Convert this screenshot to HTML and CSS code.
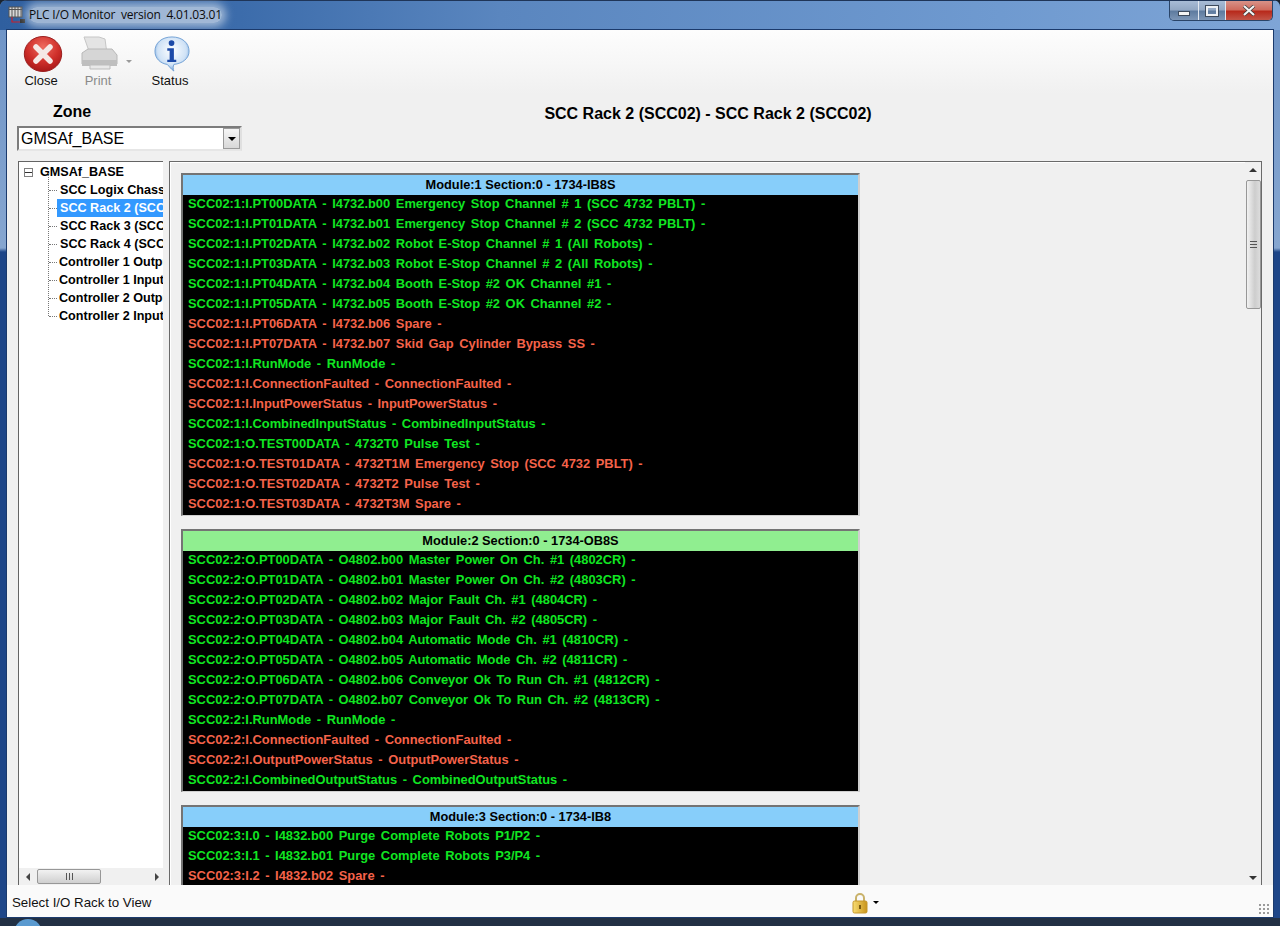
FILE: index.html
```html
<!DOCTYPE html>
<html lang="en">
<head>
<meta charset="utf-8">
<title>PLC I/O Monitor</title>
<link rel="stylesheet" href="styles.css">
</head>
<body>
<div class="window">
  <div class="titlebar">
    <svg class="app-icon" width="18" height="20" viewBox="0 0 18 20">
      <rect x="1" y="2" width="13" height="10" fill="#d8d8d8" stroke="#555"/>
      <path d="M1 4.5h13M4 2v10M7 2v10M10 2v10M13 2v10" stroke="#555" fill="none"/>
      <path d="M4 12v5h8" stroke="#c8202a" fill="none" stroke-width="1.2"/>
      <rect x="12" y="14" width="5" height="4" fill="#333"/>
    </svg>
    <span class="app-title">PLC I/O Monitor&nbsp; version&nbsp; 4.01.03.01</span>
    <div class="win-controls">
      <div class="win-btn min"><span class="glyph-min"></span></div>
      <div class="win-btn max"><span class="glyph-max"></span></div>
      <div class="win-btn close">
        <svg width="14" height="11" viewBox="0 0 14 11"><path d="M2 1l10 9M12 1L2 10" stroke="#3a3a3a" stroke-width="3.6" fill="none"/><path d="M2 1l10 9M12 1L2 10" stroke="#f4f4f4" stroke-width="2.2" fill="none"/></svg>
      </div>
    </div>
  </div>

  <div class="client">
    <div class="toolbar">
      <div class="tool">
        <svg width="40" height="36" viewBox="0 0 40 36">
          <defs>
            <radialGradient id="redg" cx="50%" cy="30%" r="70%"><stop offset="0" stop-color="#ef6a5e"/><stop offset=".6" stop-color="#cf2f2a"/><stop offset="1" stop-color="#a81818"/></radialGradient>
          </defs>
          <ellipse cx="20" cy="18" rx="18.700" ry="17.500" fill="url(#redg)" stroke="#9a2020"/>
          <path d="M13 11L27 25M27 11L13 25" stroke="#f5e9e6" stroke-width="5.500" stroke-linecap="round"/>
        </svg>
        <span class="tool-label">Close</span>
      </div>
      <div class="tool tool-print">
        <svg width="38" height="36" viewBox="0 0 38 36">
          <path d="M3 1h15l6 2 2 15H9z" fill="#e4e4e4" stroke="#c6c6c6"/>
          <path d="M1 17l6-4h24l5 6v9H1z" fill="#d6d6d6" stroke="#b8b8b8"/>
          <path d="M1 24h35v6H1z" fill="#bfbfbf"/>
          <path d="M9 29h20v4H9z" fill="#e8e8e8" stroke="#bdbdbd"/>
        </svg>
        <span class="tool-label muted">Print</span>
        <span class="print-caret"></span>
      </div>
      <div class="tool tool-status">
        <svg width="40" height="36" viewBox="0 0 40 38">
          <defs>
            <radialGradient id="blueg" cx="50%" cy="40%" r="60%"><stop offset="0" stop-color="#ffffff"/><stop offset=".7" stop-color="#cfe2f6"/><stop offset="1" stop-color="#6fa3dc"/></radialGradient>
          </defs>
          <path d="M20 1C9 1 2 7.500 2 16c0 8 6 13 13 14 2 2 4 5 7 7-1-2-1-5 0-7 9-1 16-6 16-14C38 7.500 31 1 20 1z" fill="url(#blueg)" stroke="#6f9fd4"/>
          <circle cx="19.500" cy="7.500" r="3" fill="#1c4aa8"/>
          <path d="M15 13h7v12h2.500v2.500h-9.500V25h2.500v-9.500H15z" fill="#1c4aa8"/>
        </svg>
        <span class="tool-label">Status</span>
      </div>
    </div>

    <div class="header">
      <div class="zone">
        <div class="zone-label">Zone</div>
        <div class="combo">
          <span class="combo-text">GMSAf_BASE</span>
          <span class="combo-btn"><span class="caret-down"></span></span>
        </div>
      </div>
      <div class="page-title">SCC Rack 2 (SCC02) - SCC Rack 2 (SCC02)</div>
    </div>

    <div class="main">
      <div class="tree">
        <div class="tree-body">
          <div class="tree-root"><span class="expander"></span><span class="root-conn"></span><span>GMSAf_BASE</span></div>
          <div class="tree-children">
            <div class="tree-row"><span class="conn"></span><span class="node in1">SCC Logix Chassis</span></div>
            <div class="tree-row selected"><span class="conn"></span><span class="node in1">SCC Rack 2 (SCC02)</span></div>
            <div class="tree-row"><span class="conn"></span><span class="node in1">SCC Rack 3 (SCC03)</span></div>
            <div class="tree-row"><span class="conn"></span><span class="node in1">SCC Rack 4 (SCC04)</span></div>
            <div class="tree-row"><span class="conn"></span><span class="node">Controller 1 Output</span></div>
            <div class="tree-row"><span class="conn"></span><span class="node">Controller 1 Input</span></div>
            <div class="tree-row"><span class="conn"></span><span class="node">Controller 2 Output</span></div>
            <div class="tree-row"><span class="conn"></span><span class="node">Controller 2 Input</span></div>
          </div>
        </div>
        <div class="hscroll">
          <span class="arrow-left"></span>
          <div class="hthumb"><span class="grip-v"></span></div>
          <span class="arrow-right"></span>
        </div>
      </div>

      <div class="panel">
        <div class="modules">
          <section class="module">
            <h2 class="mod-head blue">Module:1 Section:0 - 1734-IB8S</h2>
            <div class="row on">SCC02:1:I.PT00DATA - I4732.b00 Emergency Stop Channel # 1 (SCC 4732 PBLT) -</div>
            <div class="row on">SCC02:1:I.PT01DATA - I4732.b01 Emergency Stop Channel # 2 (SCC 4732 PBLT) -</div>
            <div class="row on">SCC02:1:I.PT02DATA - I4732.b02 Robot E-Stop Channel # 1 (All Robots) -</div>
            <div class="row on">SCC02:1:I.PT03DATA - I4732.b03 Robot E-Stop Channel # 2 (All Robots) -</div>
            <div class="row on">SCC02:1:I.PT04DATA - I4732.b04 Booth E-Stop #2 OK Channel #1 -</div>
            <div class="row on">SCC02:1:I.PT05DATA - I4732.b05 Booth E-Stop #2 OK Channel #2 -</div>
            <div class="row off">SCC02:1:I.PT06DATA - I4732.b06 Spare -</div>
            <div class="row off">SCC02:1:I.PT07DATA - I4732.b07 Skid Gap Cylinder Bypass SS -</div>
            <div class="row on">SCC02:1:I.RunMode - RunMode -</div>
            <div class="row off">SCC02:1:I.ConnectionFaulted - ConnectionFaulted -</div>
            <div class="row off">SCC02:1:I.InputPowerStatus - InputPowerStatus -</div>
            <div class="row on">SCC02:1:I.CombinedInputStatus - CombinedInputStatus -</div>
            <div class="row on">SCC02:1:O.TEST00DATA - 4732T0 Pulse Test -</div>
            <div class="row off">SCC02:1:O.TEST01DATA - 4732T1M Emergency Stop (SCC 4732 PBLT) -</div>
            <div class="row off">SCC02:1:O.TEST02DATA - 4732T2 Pulse Test -</div>
            <div class="row off">SCC02:1:O.TEST03DATA - 4732T3M Spare -</div>
          </section>
          <section class="module">
            <h2 class="mod-head green">Module:2 Section:0 - 1734-OB8S</h2>
            <div class="row on">SCC02:2:O.PT00DATA - O4802.b00 Master Power On Ch. #1 (4802CR) -</div>
            <div class="row on">SCC02:2:O.PT01DATA - O4802.b01 Master Power On Ch. #2 (4803CR) -</div>
            <div class="row on">SCC02:2:O.PT02DATA - O4802.b02 Major Fault Ch. #1 (4804CR) -</div>
            <div class="row on">SCC02:2:O.PT03DATA - O4802.b03 Major Fault Ch. #2 (4805CR) -</div>
            <div class="row on">SCC02:2:O.PT04DATA - O4802.b04 Automatic Mode Ch. #1 (4810CR) -</div>
            <div class="row on">SCC02:2:O.PT05DATA - O4802.b05 Automatic Mode Ch. #2 (4811CR) -</div>
            <div class="row on">SCC02:2:O.PT06DATA - O4802.b06 Conveyor Ok To Run Ch. #1 (4812CR) -</div>
            <div class="row on">SCC02:2:O.PT07DATA - O4802.b07 Conveyor Ok To Run Ch. #2 (4813CR) -</div>
            <div class="row on">SCC02:2:I.RunMode - RunMode -</div>
            <div class="row off">SCC02:2:I.ConnectionFaulted - ConnectionFaulted -</div>
            <div class="row off">SCC02:2:I.OutputPowerStatus - OutputPowerStatus -</div>
            <div class="row on">SCC02:2:I.CombinedOutputStatus - CombinedOutputStatus -</div>
          </section>
          <section class="module">
            <h2 class="mod-head blue">Module:3 Section:0 - 1734-IB8</h2>
            <div class="row on">SCC02:3:I.0 - I4832.b00 Purge Complete Robots P1/P2 -</div>
            <div class="row on">SCC02:3:I.1 - I4832.b01 Purge Complete Robots P3/P4 -</div>
            <div class="row off">SCC02:3:I.2 - I4832.b02 Spare -</div>
          </section>
        </div>
        <div class="vscroll">
          <span class="arrow-up"></span>
          <div class="vthumb"><span class="grip-h"></span></div>
          <span class="vspacer"></span>
          <span class="arrow-down"></span>
        </div>
      </div>
    </div>

    <div class="statusbar">
      <span class="status-text">Select I/O Rack to View</span>
      <svg class="lock" width="16" height="22" viewBox="0 0 16 22">
        <defs><linearGradient id="lockg" x1="0" x2="1"><stop offset="0" stop-color="#f8dc72"/><stop offset="1" stop-color="#c8941c"/></linearGradient></defs>
        <path d="M4 10V6a4 4 0 0 1 8 0v4" fill="none" stroke="#c9b26a" stroke-width="2"/>
        <rect x="1" y="9" width="14" height="12" rx="1.500" fill="url(#lockg)" stroke="#c4962a"/>
        <rect x="7" y="13" width="2" height="4" fill="#7a5a10"/>
      </svg>
      <span class="lock-caret"></span>
      <span class="resize-grip"></span>
    </div>
  </div>
  <div class="taskstrip"><span class="orb"></span></div>
</div>
</body>
</html>
```
FILE: styles.css
```css
* { box-sizing: border-box; }
html, body { margin: 0; padding: 0; }
body { width: 1280px; height: 926px; overflow: hidden; background: #1a2430; font-family: "Liberation Sans", Arial, sans-serif; }

.window { width: 1280px; height: 926px; display: flex; flex-direction: column; border-radius: 7px 7px 0 0; overflow: hidden;
  background: linear-gradient(to bottom, #6d93c6 0, #86a6d0 248px, #1e4688 252px, #1e4688 100%); }

.titlebar { height: 30px; flex: none; display: flex; align-items: flex-start; padding-left: 8px; border-top: 1px solid #1f3558;
  background: linear-gradient(to right, #2f5f9f 0, #3c6cab 240px, #5a86bf 500px, #6f9ad0 1000px, #7fa5d6 1280px); }
.app-icon { margin-top: 4px; flex: none; }
.app-title { margin: 6px 0 0 3px; font: 12px/16px "Open Sans", "Liberation Sans", sans-serif; letter-spacing: -.2px; color: #0c0c0c;
  background: rgba(225, 232, 242, .62); box-shadow: 0 0 8px 4px rgba(225, 232, 242, .62); border-radius: 8px; white-space: nowrap; }
.win-controls { margin-left: auto; margin-right: 7px; display: flex; height: 20px; border: 1px solid #2a4468; border-top: 0; border-radius: 0 0 5px 5px; overflow: hidden; }
.win-btn { height: 19px; display: flex; align-items: center; justify-content: center; background: linear-gradient(to bottom, #a8bcd6 0, #93a8c4 45%, #5f7ca0 55%, #7d96b6 100%); border-right: 1px solid #e2e8f0; }
.win-btn.min { width: 29px; }
.win-btn.max { width: 27px; }
.win-btn.close { width: 46px; border-right: 0; background: linear-gradient(to bottom, #d89288 0, #cf6c5e 45%, #b82a1c 55%, #c25548 100%); }
.glyph-min { width: 12px; height: 5px; margin-top: 5px; background: #f4f4f4; border: 1px solid #3d4a5c; }
.glyph-max { width: 12px; height: 10px; background: transparent; border: 2px solid #eef1f5; outline: 1px solid #3d4a5c; }

.client { flex: 1; min-height: 0; margin: 0 7px; display: flex; flex-direction: column; background: #f0f0f0; outline: 1px solid #1b3a6c; }

.toolbar { height: 64px; flex: none; display: flex; align-items: flex-start; padding: 6px 0 0 10px; background: linear-gradient(to bottom, #fdfdfd 0, #f7f7f7 50%, #f0f0f0 100%); }
.tool { width: 48px; display: flex; flex-direction: column; align-items: center; }
.tool svg { margin-left: 4px; }
.tool-print { margin-left: 9px; position: relative; }
.tool-status { margin-left: 24px; }
.tool-label { font-size: 13px; line-height: 15px; margin-top: 1px; color: #111; }
.tool-label.muted { color: #8a8a8a; }
.print-caret { position: absolute; right: -10px; top: 24px; border: 3px solid transparent; border-top: 3px solid #9a9a9a; }

.header { height: 67px; flex: none; display: flex; }
.zone { width: 235px; flex: none; padding-left: 10px; }
.zone-label { margin: 9px 0 0 36px; font-size: 16px; line-height: 18px; font-weight: bold; color: #000; }
.combo { margin-top: 5px; width: 225px; height: 25px; display: flex; align-items: center; background: #fff; border: 2px solid #7c7c7c; border-right-color: #e0e0e0; border-bottom-color: #e6e6e6; }
.combo-text { flex: 1; padding-left: 2px; font-size: 16px; color: #000; }
.combo-btn { width: 17px; height: 21px; display: flex; align-items: center; justify-content: center; background: linear-gradient(to bottom, #f6f6f6, #d8d8d8); border: 1px solid #9a9a9a; }
.caret-down { border: 4px solid transparent; border-top: 4px solid #000; border-bottom: 0; }
.page-title { flex: 1; padding: 11px 99px 0 0; text-align: center; font-size: 16px; line-height: 18px; font-weight: bold; color: #000; }

.main { flex: 1; min-height: 0; display: flex; padding: 0 11px; gap: 6px; }

.tree { width: 145px; flex: none; display: flex; flex-direction: column; background: #fff; border-left: 1px solid #646464; border-top: 1px solid #646464; height: 725px; padding-top: 1px; }
.tree-body { flex: 1; min-height: 0; overflow: hidden; font-size: 12.6px; font-weight: bold; color: #000; white-space: nowrap; }
.tree-root { height: 18px; display: flex; align-items: center; padding-left: 5px; }
.expander { width: 9px; height: 9px; border: 1px solid #808080; background: linear-gradient(to bottom, #fff 0, #fff 3px, #333 3px, #333 4px, #fff 4px); flex: none; }
.root-conn { width: 7px; flex: none; }
.tree-children { position: relative; }
.tree-children::before { content: ""; position: absolute; left: 29px; top: -8px; bottom: 9px; border-left: 1px dotted #777; }
.tree-row { height: 18px; display: flex; align-items: center; padding-left: 30px; }
.conn { width: 8px; flex: none; border-top: 1px dotted #777; }
.node { height: 18px; line-height: 18px; flex: 1; padding-left: 2px; overflow: hidden; }
.node.in1 { padding-left: 3px; }
.selected .node { background: #3399ff; color: #fff; }

.hscroll { height: 17px; flex: none; margin-bottom: 1px; display: flex; align-items: center; background: #f0f0f0; padding: 0 4px 0 7px; }
.arrow-left { border: 4px solid transparent; border-right: 4px solid #444; border-left: 0; }
.arrow-right { margin-left: auto; border: 4px solid transparent; border-left: 4px solid #444; border-right: 0; }
.hthumb { width: 64px; height: 15px; margin-left: 7px; display: flex; align-items: center; justify-content: center; border: 1px solid #979797; border-radius: 2px; background: linear-gradient(to bottom, #f2f2f2, #cfcfcf); }
.grip-v { width: 7px; height: 7px; background: repeating-linear-gradient(to right, #555 0, #555 1px, transparent 1px, transparent 3px); }

.panel { flex: 1; min-width: 0; height: 725px; display: flex; background: #f0f0f0; border: 1px solid #6a6a6a; overflow: hidden; box-shadow: inset 1px 1px 0 #fff; }
.modules { flex: 1; min-width: 0; padding: 11px 0 0 11px; display: flex; flex-direction: column; gap: 13px; }
.module { width: 679px; flex: none; background: #000; border: 2px solid #747474; border-bottom: 1px solid #cfcfcf; border-right-color: #cfcfcf; }
.mod-head { margin: 0; height: 20px; font-size: 12.8px; line-height: 19px; font-weight: bold; text-align: center; color: #000; }
.mod-head.blue { background: #87cefa; }
.mod-head.green { background: #90ee90; }
.row { height: 20px; padding-left: 5px; font-size: 12.9px; line-height: 18px; font-weight: bold; white-space: nowrap; word-spacing: 2px; }
.row.on { color: #10e622; }
.row.off { color: #f5634a; }

.vscroll { width: 16px; flex: none; display: flex; flex-direction: column; align-items: center; background: #f0f0f0; }
.arrow-up { margin-top: 6px; border: 4px solid transparent; border-bottom: 4px solid #333; border-top: 0; }
.vthumb { width: 15px; height: 129px; margin-top: 8px; display: flex; align-items: center; justify-content: center; border: 1px solid #979797; border-radius: 2px; background: linear-gradient(to right, #f2f2f2, #cdcdcd 60%, #dcdcdc); }
.grip-h { width: 7px; height: 7px; background: repeating-linear-gradient(to bottom, #555 0, #555 1px, transparent 1px, transparent 3px); }
.vspacer { flex: 1; }
.arrow-down { margin-bottom: 5px; border: 4px solid transparent; border-top: 4px solid #333; border-bottom: 0; }

.statusbar { height: 32px; flex: none; display: flex; align-items: center; padding: 2px 3px 0 5px; background: #fafafa; position: relative; }
.status-text { font-size: 13.3px; color: #111; }
.lock { position: absolute; left: 845px; top: 7px; }
.lock-caret { position: absolute; left: 866px; top: 16px; border: 3px solid transparent; border-top: 3px solid #000; border-bottom: 0; }
.resize-grip { margin-left: auto; width: 11px; height: 11px; margin-top: 14px; background: radial-gradient(circle at 1px 1px, #9a9a9a 1px, transparent 1.2px) 0 0 / 4px 4px; }

.taskstrip { height: 8px; flex: none; margin-top: 1px; background: #223044; position: relative; overflow: hidden; }
.orb { position: absolute; left: 14px; top: 1px; width: 28px; height: 28px; border-radius: 50%; background: #5a9ad0; }
```
